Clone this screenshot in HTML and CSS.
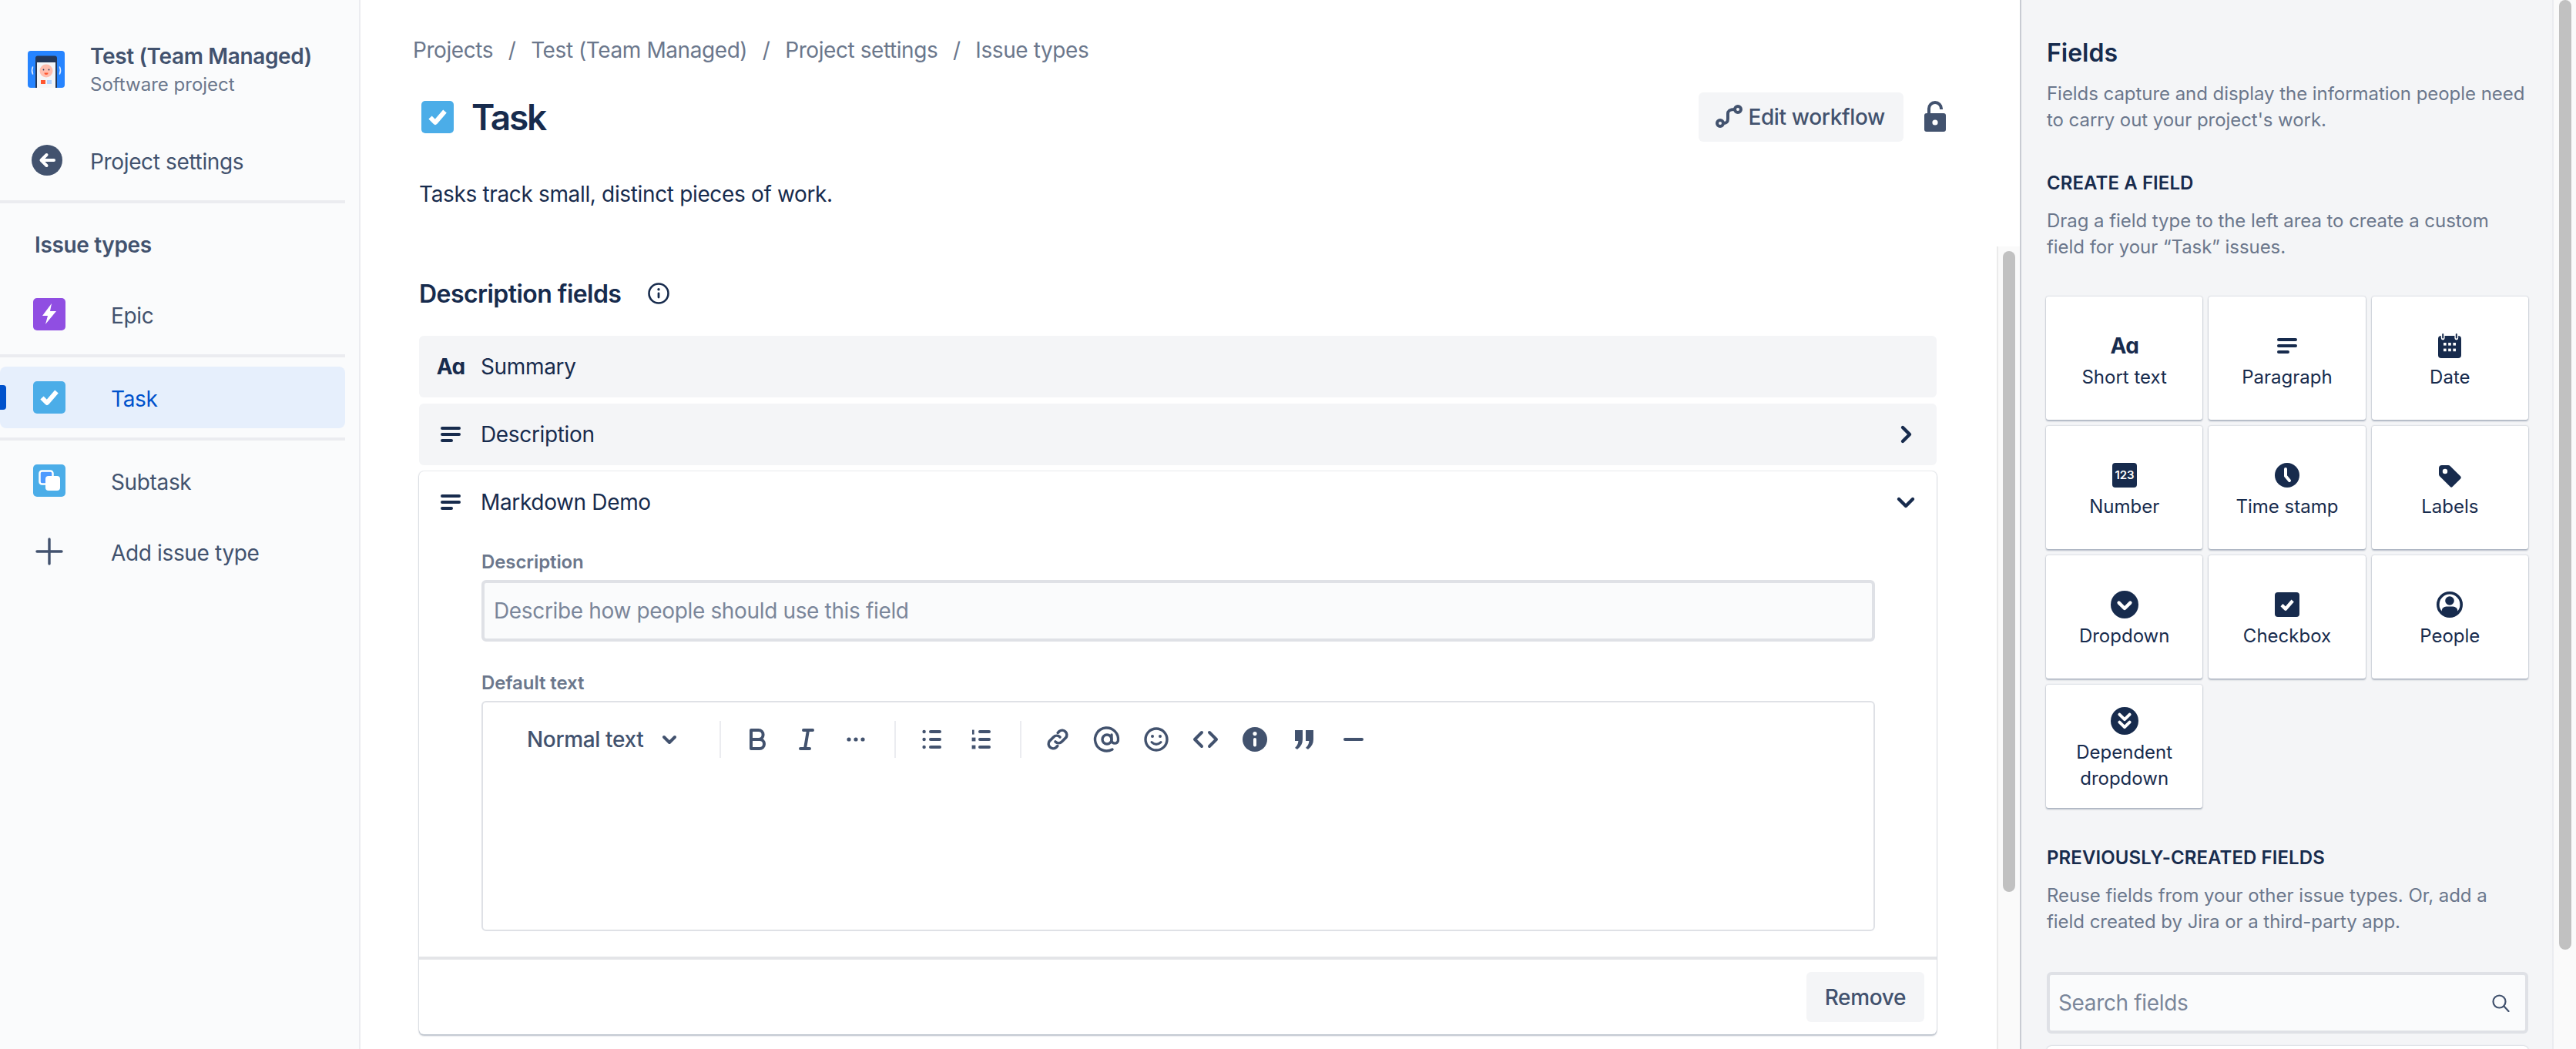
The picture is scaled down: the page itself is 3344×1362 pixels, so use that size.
FILE: index.html
```html
<!DOCTYPE html>
<html lang="en">
<head>
  <meta charset="UTF-8">
  <title>Issue types - Task</title>
  <link rel="stylesheet" href="styles.css">
</head>
<body>
  <svg class="sprite" aria-hidden="true">
    <symbol id="i-para" viewBox="0 0 24 24"><rect x="5.5" y="7" width="13" height="2" rx="1" fill="currentColor"/><rect x="5.5" y="11" width="13" height="2" rx="1" fill="currentColor"/><rect x="5.5" y="15" width="8" height="2" rx="1" fill="currentColor"/></symbol>
    <symbol id="i-check-box" viewBox="0 0 42 42"><rect width="42" height="42" rx="5" fill="#4bade8"/><path d="M11.500 21.500l6.500 6.500L30.500 13.500" fill="none" stroke="#fff" stroke-width="6" stroke-linejoin="round"/></symbol>
    <symbol id="i-cal" viewBox="0 0 24 24"><path d="M6.5 5.5h11a2 2 0 0 1 2 2V18a2 2 0 0 1-2 2h-11a2 2 0 0 1-2-2V7.500a2 2 0 0 1 2-2z" fill="currentColor"/><path d="M7.600 4.500v2.500M16.400 4.500v2.500" stroke="#fff" stroke-width="2.400" stroke-linecap="round"/><path d="M7.600 4.500v2.300M16.400 4.500v2.300" stroke="currentColor" stroke-width="1" stroke-linecap="round"/><g fill="#fff"><rect x="8" y="10" width="1.800" height="1.800"/><rect x="11.100" y="10" width="1.800" height="1.800"/><rect x="14.200" y="10" width="1.800" height="1.800"/><rect x="8" y="13.800" width="1.800" height="1.800"/><rect x="11.100" y="13.800" width="1.800" height="1.800"/><rect x="14.200" y="13.800" width="1.800" height="1.800"/></g></symbol>
    <symbol id="i-clock" viewBox="0 0 24 24"><circle cx="12" cy="12" r="8" fill="currentColor"/><path d="M11 8v4.500l2.500 3" fill="none" stroke="#fff" stroke-width="2" stroke-linecap="round" stroke-linejoin="round"/></symbol>
    <symbol id="i-tag" viewBox="0 0 24 24"><path d="M5 7.500A2 2 0 0 1 7 5.500h4a2 2 0 0 1 1.400.6l6.700 6.700a1 1 0 0 1 0 1.400l-5.300 5.300a1 1 0 0 1-1.400 0L5.600 12.800A2 2 0 0 1 5 11.400z" fill="currentColor"/><circle cx="9" cy="9.500" r="1.600" fill="#fff"/></symbol>
    <symbol id="i-drop" viewBox="0 0 24 24"><circle cx="12" cy="12" r="9" fill="currentColor"/><path d="M8.300 10.800l3.700 3.700 3.700-3.700" fill="none" stroke="#fff" stroke-width="2.200" stroke-linecap="round" stroke-linejoin="round"/></symbol>
    <symbol id="i-box" viewBox="0 0 24 24"><rect x="4" y="4" width="16" height="16" rx="2" fill="currentColor"/><path d="M8.500 12.300l2.500 2.500 4.600-5.300" fill="none" stroke="#fff" stroke-width="2.200" stroke-linejoin="round"/></symbol>
    <symbol id="i-person" viewBox="0 0 24 24"><circle cx="12" cy="12" r="7.600" fill="#fff" stroke="currentColor" stroke-width="1.800"/><circle cx="12" cy="9.500" r="2.900" fill="currentColor"/><path d="M6.800 17.200v-1a3 3 0 0 1 3-3h4.400a3 3 0 0 1 3 3v1A7.500 7.500 0 0 1 12 19.500a7.500 7.500 0 0 1-5.200-2.300z" fill="currentColor"/></symbol>
    <symbol id="i-drop2" viewBox="0 0 24 24"><circle cx="12" cy="12" r="9" fill="currentColor"/><path d="M8.700 7.800l3.300 3.300 3.300-3.300M8.700 12.800l3.300 3.300 3.300-3.300" fill="none" stroke="#fff" stroke-width="2" stroke-linecap="round" stroke-linejoin="round"/></symbol>
  </svg>

  <div class="app">
    <nav class="sidebar">
      <div class="project">
        <svg class="project-logo" viewBox="0 0 48 48" width="48" height="48">
          <rect width="48" height="48" rx="4" fill="#2684ff"/>
          <path d="M10 9.500a3 3 0 0 1 3-3h22a3 3 0 0 1 3 3V48H10z" fill="#253858"/>
          <rect x="12" y="15" width="24" height="33" fill="#f4f5f7"/>
          <circle cx="24" cy="26" r="8.500" fill="#ffbdad"/>
          <circle cx="20.500" cy="24.500" r=".9" fill="#253858"/><circle cx="27.500" cy="24.500" r=".9" fill="#253858"/>
          <path d="M21.500 28.500h5a2.500 2.500 0 0 1-5 0z" fill="#ff5630"/>
          <rect x="17" y="38" width="6" height="5" fill="#ff5630"/>
          <rect x="25" y="38" width="6" height="5" fill="#b3d4ff"/>
          <path d="M6.500 21q-2 4.500 0 9M41.500 21q2 4.500 0 9" fill="none" stroke="#deebff" stroke-width="1.600" stroke-linecap="round"/>
        </svg>
        <div>
          <div class="project-name">Test (Team Managed)</div>
          <div class="project-type">Software project</div>
        </div>
      </div>
      <div class="back-link">
        <svg viewBox="0 0 40 40" width="40" height="40"><circle cx="20" cy="20" r="20" fill="#42526e"/><path d="M29 20H13M19.500 13L12.500 20l7 7" fill="none" stroke="#fff" stroke-width="4" stroke-linecap="round" stroke-linejoin="round"/></svg>
        <span>Project settings</span>
      </div>
      <div class="side-rule"></div>
      <div class="side-heading">Issue types</div>
      <div class="side-row">
        <svg viewBox="0 0 42 42" width="42" height="42"><rect width="42" height="42" rx="5" fill="#904ee2"/><path d="M24 7L12 23h7l-3 11 14-17h-8z" fill="#fff"/></svg>
        <span>Epic</span>
      </div>
      <div class="side-rule rule-tight"></div>
      <div class="side-row is-active">
        <i class="active-mark"></i>
        <svg width="42" height="42"><use href="#i-check-box"/></svg>
        <span>Task</span>
      </div>
      <div class="side-rule rule-tight"></div>
      <div class="side-row">
        <svg viewBox="0 0 42 42" width="42" height="42"><rect width="42" height="42" rx="5" fill="#4bade8"/><rect x="8.500" y="8.500" width="17" height="17" rx="3" fill="#4c9aff" stroke="#fff" stroke-width="2.500"/><rect x="16" y="15" width="19" height="19" rx="4" fill="#fff"/></svg>
        <span>Subtask</span>
      </div>
      <div class="side-row add-row">
        <svg viewBox="0 0 42 42" width="42" height="42"><path d="M21 5v32M5 21h32" stroke="#42526e" stroke-width="3.400" stroke-linecap="round"/></svg>
        <span>Add issue type</span>
      </div>
    </nav>

    <main class="content">
      <div class="crumbs">
        <span>Projects</span><b>/</b><span>Test (Team Managed)</span><b>/</b><span>Project settings</span><b>/</b><span>Issue types</span>
      </div>
      <header class="page-head">
        <svg class="page-icon" width="42" height="42"><use href="#i-check-box"/></svg>
        <h1>Task</h1>
        <button class="btn btn-workflow">
          <svg viewBox="0 0 20 20" width="40" height="40"><circle cx="4" cy="14" r="2" fill="none" stroke="#42526e" stroke-width="2"/><circle cx="15.500" cy="5" r="2" fill="none" stroke="#42526e" stroke-width="2"/><path d="M6 14c2.500 0 3-1 3-3V8c0-2 1-3 4.500-3" fill="none" stroke="#42526e" stroke-width="2"/></svg>
          Edit workflow
        </button>
        <svg class="lock" viewBox="0 0 24 24" width="48" height="48"><path d="M8 10V6.500a4 4 0 0 1 8 0V7" fill="none" stroke="#42526e" stroke-width="2"/><rect x="5" y="9.500" width="14" height="12" rx="1.500" fill="#42526e"/><circle cx="12" cy="15.500" r="1.800" fill="#fff"/></svg>
      </header>
      <p class="lead">Tasks track small, distinct pieces of work.</p>
      <div class="section-head">
        <h2>Description fields</h2>
        <svg viewBox="0 0 28 28" width="28" height="28"><circle cx="14" cy="14" r="12.500" fill="none" stroke="#172b4d" stroke-width="2.600"/><circle cx="14" cy="8.800" r="1.700" fill="#172b4d"/><rect x="12.600" y="12.500" width="2.800" height="8" rx="1.400" fill="#172b4d"/></svg>
      </div>

      <div class="field-row">
        <span class="aa">Aɑ</span>
        <span>Summary</span>
      </div>
      <div class="field-row">
        <svg width="48" height="48"><use href="#i-para"/></svg>
        <span>Description</span>
        <svg class="chev" viewBox="0 0 24 24" width="48" height="48"><path d="M10 7.500l4.500 4.500-4.500 4.500" fill="none" stroke="#172b4d" stroke-width="2.200" stroke-linecap="round" stroke-linejoin="round"/></svg>
      </div>

      <section class="field-card">
        <div class="field-row is-open">
          <svg width="48" height="48"><use href="#i-para"/></svg>
          <span>Markdown Demo</span>
          <svg class="chev" viewBox="0 0 24 24" width="48" height="48"><path d="M7.500 10l4.500 4.500 4.500-4.500" fill="none" stroke="#172b4d" stroke-width="2.200" stroke-linecap="round" stroke-linejoin="round"/></svg>
        </div>
        <div class="field-body">
          <label class="field-label first">Description</label>
          <div class="text-input">Describe how people should use this field</div>
          <label class="field-label second">Default text</label>
          <div class="editor">
            <div class="toolbar">
              <span class="style-pick">Normal text</span>
              <svg class="style-chev" viewBox="0 0 24 24" width="48" height="48"><path d="M8.500 10.500l3.500 3.500 3.500-3.500" fill="none" stroke="#42526e" stroke-width="2" stroke-linecap="round" stroke-linejoin="round"/></svg>
              <i class="tool-sep first-sep"></i>
              <div class="tool-group">
                <button class="tool"><svg viewBox="0 0 24 24"><path d="M8 6h4.800a3 3 0 0 1 0 6H8zm0 6h5.500a3 3 0 0 1 0 6H8z" fill="none" stroke="currentColor" stroke-width="2" stroke-linejoin="round"/></svg></button>
                <button class="tool"><svg viewBox="0 0 24 24"><path d="M10 6h6M8 18h6M13 6l-2 12" fill="none" stroke="currentColor" stroke-width="2" stroke-linecap="round"/></svg></button>
                <button class="tool"><svg viewBox="0 0 24 24"><circle cx="7.500" cy="12" r="1.300" fill="currentColor"/><circle cx="12" cy="12" r="1.300" fill="currentColor"/><circle cx="16.500" cy="12" r="1.300" fill="currentColor"/></svg></button>
              </div>
              <i class="tool-sep"></i>
              <div class="tool-group">
                <button class="tool"><svg viewBox="0 0 24 24"><g fill="currentColor"><circle cx="6.800" cy="7" r="1.100"/><circle cx="6.800" cy="12" r="1.100"/><circle cx="6.800" cy="17" r="1.100"/><rect x="10" y="6" width="8" height="2" rx="1"/><rect x="10" y="11" width="8" height="2" rx="1"/><rect x="10" y="16" width="8" height="2" rx="1"/></g></svg></button>
                <button class="tool"><svg viewBox="0 0 24 24"><g fill="currentColor"><rect x="6" y="5.800" width="1.300" height="3"/><rect x="5.800" y="10.800" width="2.400" height="2.400"/><rect x="5.800" y="15.800" width="2.400" height="2.400"/><rect x="10" y="6" width="8" height="2" rx="1"/><rect x="10" y="11" width="8" height="2" rx="1"/><rect x="10" y="16" width="8" height="2" rx="1"/></g></svg></button>
              </div>
              <i class="tool-sep"></i>
              <div class="tool-group">
                <button class="tool"><svg viewBox="0 0 24 24"><g fill="none" stroke="currentColor" stroke-width="1.800" stroke-linecap="round"><path d="M10.500 13.500a3 3 0 0 0 4.200 0l2.600-2.600a3 3 0 0 0-4.200-4.200l-1 1"/><path d="M13.500 10.500a3 3 0 0 0-4.200 0l-2.600 2.600a3 3 0 0 0 4.200 4.200l1-1"/></g></svg></button>
                <button class="tool"><svg viewBox="0 0 24 24"><g fill="none" stroke="currentColor" stroke-width="1.700" stroke-linecap="round"><circle cx="12" cy="12" r="3"/><path d="M15 9v4a2.200 2.200 0 0 0 4.200 0A7.500 7.500 0 1 0 15.500 18.500"/></g></svg></button>
                <button class="tool"><svg viewBox="0 0 24 24"><circle cx="12" cy="12" r="7" fill="none" stroke="currentColor" stroke-width="1.700"/><circle cx="9.500" cy="10" r="1" fill="currentColor"/><circle cx="14.500" cy="10" r="1" fill="currentColor"/><path d="M9 13.800q3 2.800 6 0" fill="none" stroke="currentColor" stroke-width="1.500" stroke-linecap="round"/></svg></button>
                <button class="tool"><svg viewBox="0 0 24 24"><path d="M9.500 7.500L5 12l4.500 4.500M14.500 7.500L19 12l-4.500 4.500" fill="none" stroke="currentColor" stroke-width="2" stroke-linecap="round" stroke-linejoin="round"/></svg></button>
                <button class="tool"><svg viewBox="0 0 24 24"><circle cx="12" cy="12" r="8" fill="currentColor"/><circle cx="12" cy="8.300" r="1.300" fill="#fff"/><rect x="11" y="11" width="2" height="5.800" rx="1" fill="#fff"/></svg></button>
                <button class="tool"><svg viewBox="0 0 24 24"><path d="M6 6h5v6q0 4-3.500 6.500L6 17.500q2-1.800 2.200-4.500H6zM13 6h5v6q0 4-3.500 6.500L13 17.500q2-1.800 2.200-4.500H13z" fill="currentColor"/></svg></button>
                <button class="tool"><svg viewBox="0 0 24 24"><rect x="5.500" y="11" width="13" height="2" rx="1" fill="currentColor"/></svg></button>
              </div>
            </div>
          </div>
        </div>
        <div class="field-foot">
          <button class="btn btn-remove">Remove</button>
        </div>
      </section>

      <div class="main-track"><div class="main-thumb"></div></div>
    </main>

    <aside class="panel-wrap">
      <div class="panel">
        <h2 class="panel-title">Fields</h2>
        <p class="panel-text title-text">Fields capture and display the information people need<br>to carry out your project's work.</p>
        <h3 class="panel-sub">CREATE A FIELD</h3>
        <p class="panel-text">Drag a field type to the left area to create a custom<br>field for your “Task” issues.</p>
        <div class="type-grid">
          <div class="type-card"><span class="aa aa-card">Aɑ</span><span>Short text</span></div>
          <div class="type-card"><svg width="48" height="48"><use href="#i-para"/></svg><span>Paragraph</span></div>
          <div class="type-card"><svg width="48" height="48"><use href="#i-cal"/></svg><span>Date</span></div>
          <div class="type-card"><svg viewBox="0 0 24 24" width="48" height="48"><rect x="4" y="4" width="16" height="16" rx="2" fill="currentColor"/><text x="12" y="14.600" class="num-glyph">123</text></svg><span>Number</span></div>
          <div class="type-card"><svg width="48" height="48"><use href="#i-clock"/></svg><span>Time stamp</span></div>
          <div class="type-card"><svg width="48" height="48"><use href="#i-tag"/></svg><span>Labels</span></div>
          <div class="type-card"><svg width="48" height="48"><use href="#i-drop"/></svg><span>Dropdown</span></div>
          <div class="type-card"><svg width="48" height="48"><use href="#i-box"/></svg><span>Checkbox</span></div>
          <div class="type-card"><svg width="48" height="48"><use href="#i-person"/></svg><span>People</span></div>
          <div class="type-card"><svg width="48" height="48"><use href="#i-drop2"/></svg><span>Dependent<br>dropdown</span></div>
        </div>
        <h3 class="panel-sub">PREVIOUSLY-CREATED FIELDS</h3>
        <p class="panel-text">Reuse fields from your other issue types. Or, add a<br>field created by Jira or a third-party app.</p>
        <div class="search">
          <span>Search fields</span>
          <svg viewBox="0 0 24 24" width="24" height="24"><circle cx="10.500" cy="10.500" r="8" fill="none" stroke="#42526e" stroke-width="2.200"/><path d="M16.500 16.500l6 6.500" stroke="#42526e" stroke-width="2.200" stroke-linecap="round"/></svg>
        </div>
        <div class="field-stub"></div>
      </div>
      <div class="panel-track"><div class="panel-thumb"></div></div>
    </aside>
  </div>
</body>
</html>
```

FILE: styles.css
```css
* {
  box-sizing: border-box;
}
html, body {
  margin: 0;
  height: 100%;
  overflow: hidden;
}
body {
  font-family: Inter, "Noto Sans", sans-serif;
  font-size: 28px;
  letter-spacing: -.35px;
  color: #172b4d;
  background: #fff;
}
h1, h2, h3, p {
  margin: 0;
}
button {
  font: inherit;
  letter-spacing: inherit;
  border: 0;
  padding: 0;
  background: none;
}
.sprite {
  position: absolute;
  width: 0;
  height: 0;
}
.app {
  display: flex;
  height: 1362px;
  overflow: hidden;
}

/* left nav */
.sidebar {
  width: 468px;
  flex: none;
  padding-top: 55px;
  background: #fafbfc;
  border-right: 2px solid #ebecf0;
  color: #42526e;
}
.project {
  display: flex;
  gap: 33px;
  padding-left: 36px;
  height: 73px;
}
.project-logo {
  margin-top: 11px;
}
.project-name {
  font-weight: 600;
  line-height: 36px;
}
.project-type {
  font-size: 24px;
  line-height: 37px;
  letter-spacing: 0;
  color: #6b778c;
}
.back-link {
  display: flex;
  align-items: center;
  gap: 36px;
  height: 40px;
  margin-top: 60px;
  padding-left: 41px;
}
.back-link span, .side-row span {
  padding-top: 3px;
}
.side-rule {
  width: 448px;
  height: 4px;
  margin-top: 32px;
  background: #ebecf0;
}
.rule-tight {
  margin: 12px 0;
}
.side-heading {
  margin-top: 36px;
  margin-bottom: 32px;
  padding-left: 45px;
  font-weight: 600;
  line-height: 36px;
}
.side-row {
  position: relative;
  display: flex;
  align-items: center;
  gap: 59px;
  width: 448px;
  height: 80px;
  padding-left: 43px;
  border-radius: 8px;
}
.is-active {
  background: #e6effc;
  color: #0052cc;
}
.active-mark {
  position: absolute;
  left: 0;
  top: 24px;
  width: 8px;
  height: 32px;
  border-radius: 0 4px 4px 0;
  background: #0052cc;
}
.add-row {
  margin-top: 12px;
}

/* main column */
.content {
  position: relative;
  flex: 1;
  min-width: 0;
  padding: 45px 108px 0 76px;
  overflow: hidden;
}
.crumbs {
  display: flex;
  align-items: center;
  height: 40px;
  margin-left: -8px;
  letter-spacing: -.42px;
  color: #6b778c;
}
.crumbs b {
  width: 49px;
  text-align: center;
  font-weight: 400;
}
.page-head {
  display: flex;
  align-items: center;
  height: 64px;
  margin-top: 35px;
}
.page-icon {
  margin-left: 3px;
  margin-right: 23px;
}
h1 {
  flex: 1;
  font-size: 46px;
  font-weight: 600;
  letter-spacing: -2.2px;
  line-height: 64px;
}
.btn {
  display: flex;
  align-items: center;
  height: 64px;
  border-radius: 6px;
  background: #f4f5f7;
  color: #42526e;
  font-weight: 500;
}
.btn-workflow {
  gap: 4px;
  padding: 0 24px 0 20px;
}
.lock {
  margin: 0 -22px 0 17px;
}
.lead {
  margin-top: 48px;
  line-height: 40px;
}
.section-head {
  display: flex;
  align-items: center;
  gap: 35px;
  height: 40px;
  margin-top: 89px;
}
.section-head h2 {
  font-size: 32px;
  font-weight: 600;
  letter-spacing: -.55px;
}
.field-row {
  display: flex;
  align-items: center;
  gap: 15px;
  height: 80px;
  margin-top: 8px;
  padding: 0 16px 0 17px;
  border-radius: 6px;
  background: #f4f5f7;
}
.section-head + .field-row {
  margin-top: 35px;
}
.field-row.is-open {
  margin-top: 0;
  background: none;
}
.chev {
  margin-left: auto;
}
.aa {
  width: 48px;
  text-align: center;
  font-size: 28px;
  font-weight: 700;
  letter-spacing: -1px;
}
.field-card {
  margin-top: 8px;
  border-radius: 6px;
  background: #fff;
  box-shadow: 0 2px 2px rgba(9, 30, 66, .25), 0 0 2px rgba(9, 30, 66, .31);
}
.field-body {
  padding: 0 80px 33px 81px;
}
.field-label {
  display: block;
  font-size: 24px;
  font-weight: 600;
  line-height: 32px;
  letter-spacing: -.1px;
  color: #6b778c;
  margin-bottom: 7px;
}
.first {
  margin-top: 22px;
}
.second {
  margin-top: 38px;
}
.text-input {
  height: 80px;
  padding: 0 12px;
  display: flex;
  align-items: center;
  border: 4px solid #dfe1e6;
  border-radius: 6px;
  background: #fafbfc;
  color: #7a869a;
}
.editor {
  height: 299px;
  border: 2px solid #dfe1e6;
  border-radius: 6px;
}
.toolbar {
  display: flex;
  align-items: center;
  height: 48px;
  margin-top: 24px;
  padding-left: 57px;
  color: #42526e;
}
.style-pick {
  width: 161px;
  font-weight: 500;
}
.style-chev {
  flex: none;
}
.tool-sep {
  width: 2px;
  height: 48px;
  margin: 0 15px 0 18px;
  background: #ebecf0;
}
.first-sep {
  margin-left: 41px;
}
.tool-group {
  display: flex;
}
.tool {
  width: 64px;
  height: 48px;
  display: flex;
  align-items: center;
  justify-content: center;
  color: #42526e;
}
.tool svg {
  width: 48px;
  height: 48px;
}
.field-foot {
  display: flex;
  justify-content: flex-end;
  padding: 16px;
  border-top: 4px solid #e4e5e8;
}
.btn-remove {
  height: 65px;
  padding: 0 24px;
}
.main-track {
  position: absolute;
  top: 320px;
  right: 0;
  bottom: 0;
  width: 30px;
  padding: 6px 0 0 6px;
  border-left: 2px solid #ebebeb;
  background: #fafafa;
}
.main-thumb {
  width: 16px;
  height: 832px;
  border-radius: 8px;
  background: #c1c1c1;
}

/* right panel */
.panel-wrap {
  display: flex;
  width: 722px;
  flex: none;
}
.panel {
  width: 693px;
  padding: 49px 0 0 33px;
  background: #f4f5f7;
  border-left: 2px solid #c9ccd3;
  border-right: 2px solid #ebecf0;
  overflow: hidden;
}
.panel-title {
  font-size: 32px;
  font-weight: 600;
  line-height: 40px;
  letter-spacing: 0;
}
.panel-text {
  margin-top: 16px;
  font-size: 24px;
  line-height: 34px;
  letter-spacing: -.05px;
  color: #6b778c;
}
.panel-sub {
  margin-top: 49px;
  font-size: 24px;
  font-weight: 600;
  line-height: 32px;
  letter-spacing: .08px;
}
.type-grid {
  display: grid;
  grid-template-columns: repeat(3, 1fr);
  grid-auto-rows: 160px;
  gap: 8px;
  width: 626px;
  margin: 47px 0 0 -1px;
}
.type-card {
  display: flex;
  flex-direction: column;
  align-items: center;
  justify-content: center;
  padding-top: 2px;
  border-radius: 3px;
  background: #fff;
  font-size: 24px;
  line-height: 34px;
  letter-spacing: 0;
  text-align: center;
  box-shadow: 0 2px 2px rgba(9, 30, 66, .25), 0 0 2px rgba(9, 30, 66, .31);
}
.aa-card {
  height: 48px;
  line-height: 48px;
}
.num-glyph {
  fill: #fff;
  font-family: Inter, sans-serif;
  font-size: 7.5px;
  font-weight: 600;
  text-anchor: middle;
}
.search {
  display: flex;
  align-items: center;
  justify-content: space-between;
  width: 625px;
  height: 80px;
  margin-top: 48px;
  padding: 0 20px 0 11px;
  border: 4px solid #dfe1e6;
  border-radius: 6px;
  background: #fafbfc;
  color: #7a869a;
}
.field-stub {
  width: 625px;
  height: 80px;
  margin-top: 16px;
  border-radius: 6px;
  background: #fff;
  box-shadow: 0 0 2px rgba(9, 30, 66, .31);
}
.panel-track {
  flex: 1;
  padding-left: 7px;
  background: #fafafa;
}
.panel-thumb {
  width: 16px;
  height: 1233px;
  border-radius: 8px;
  background: #c1c1c1;
}
```
